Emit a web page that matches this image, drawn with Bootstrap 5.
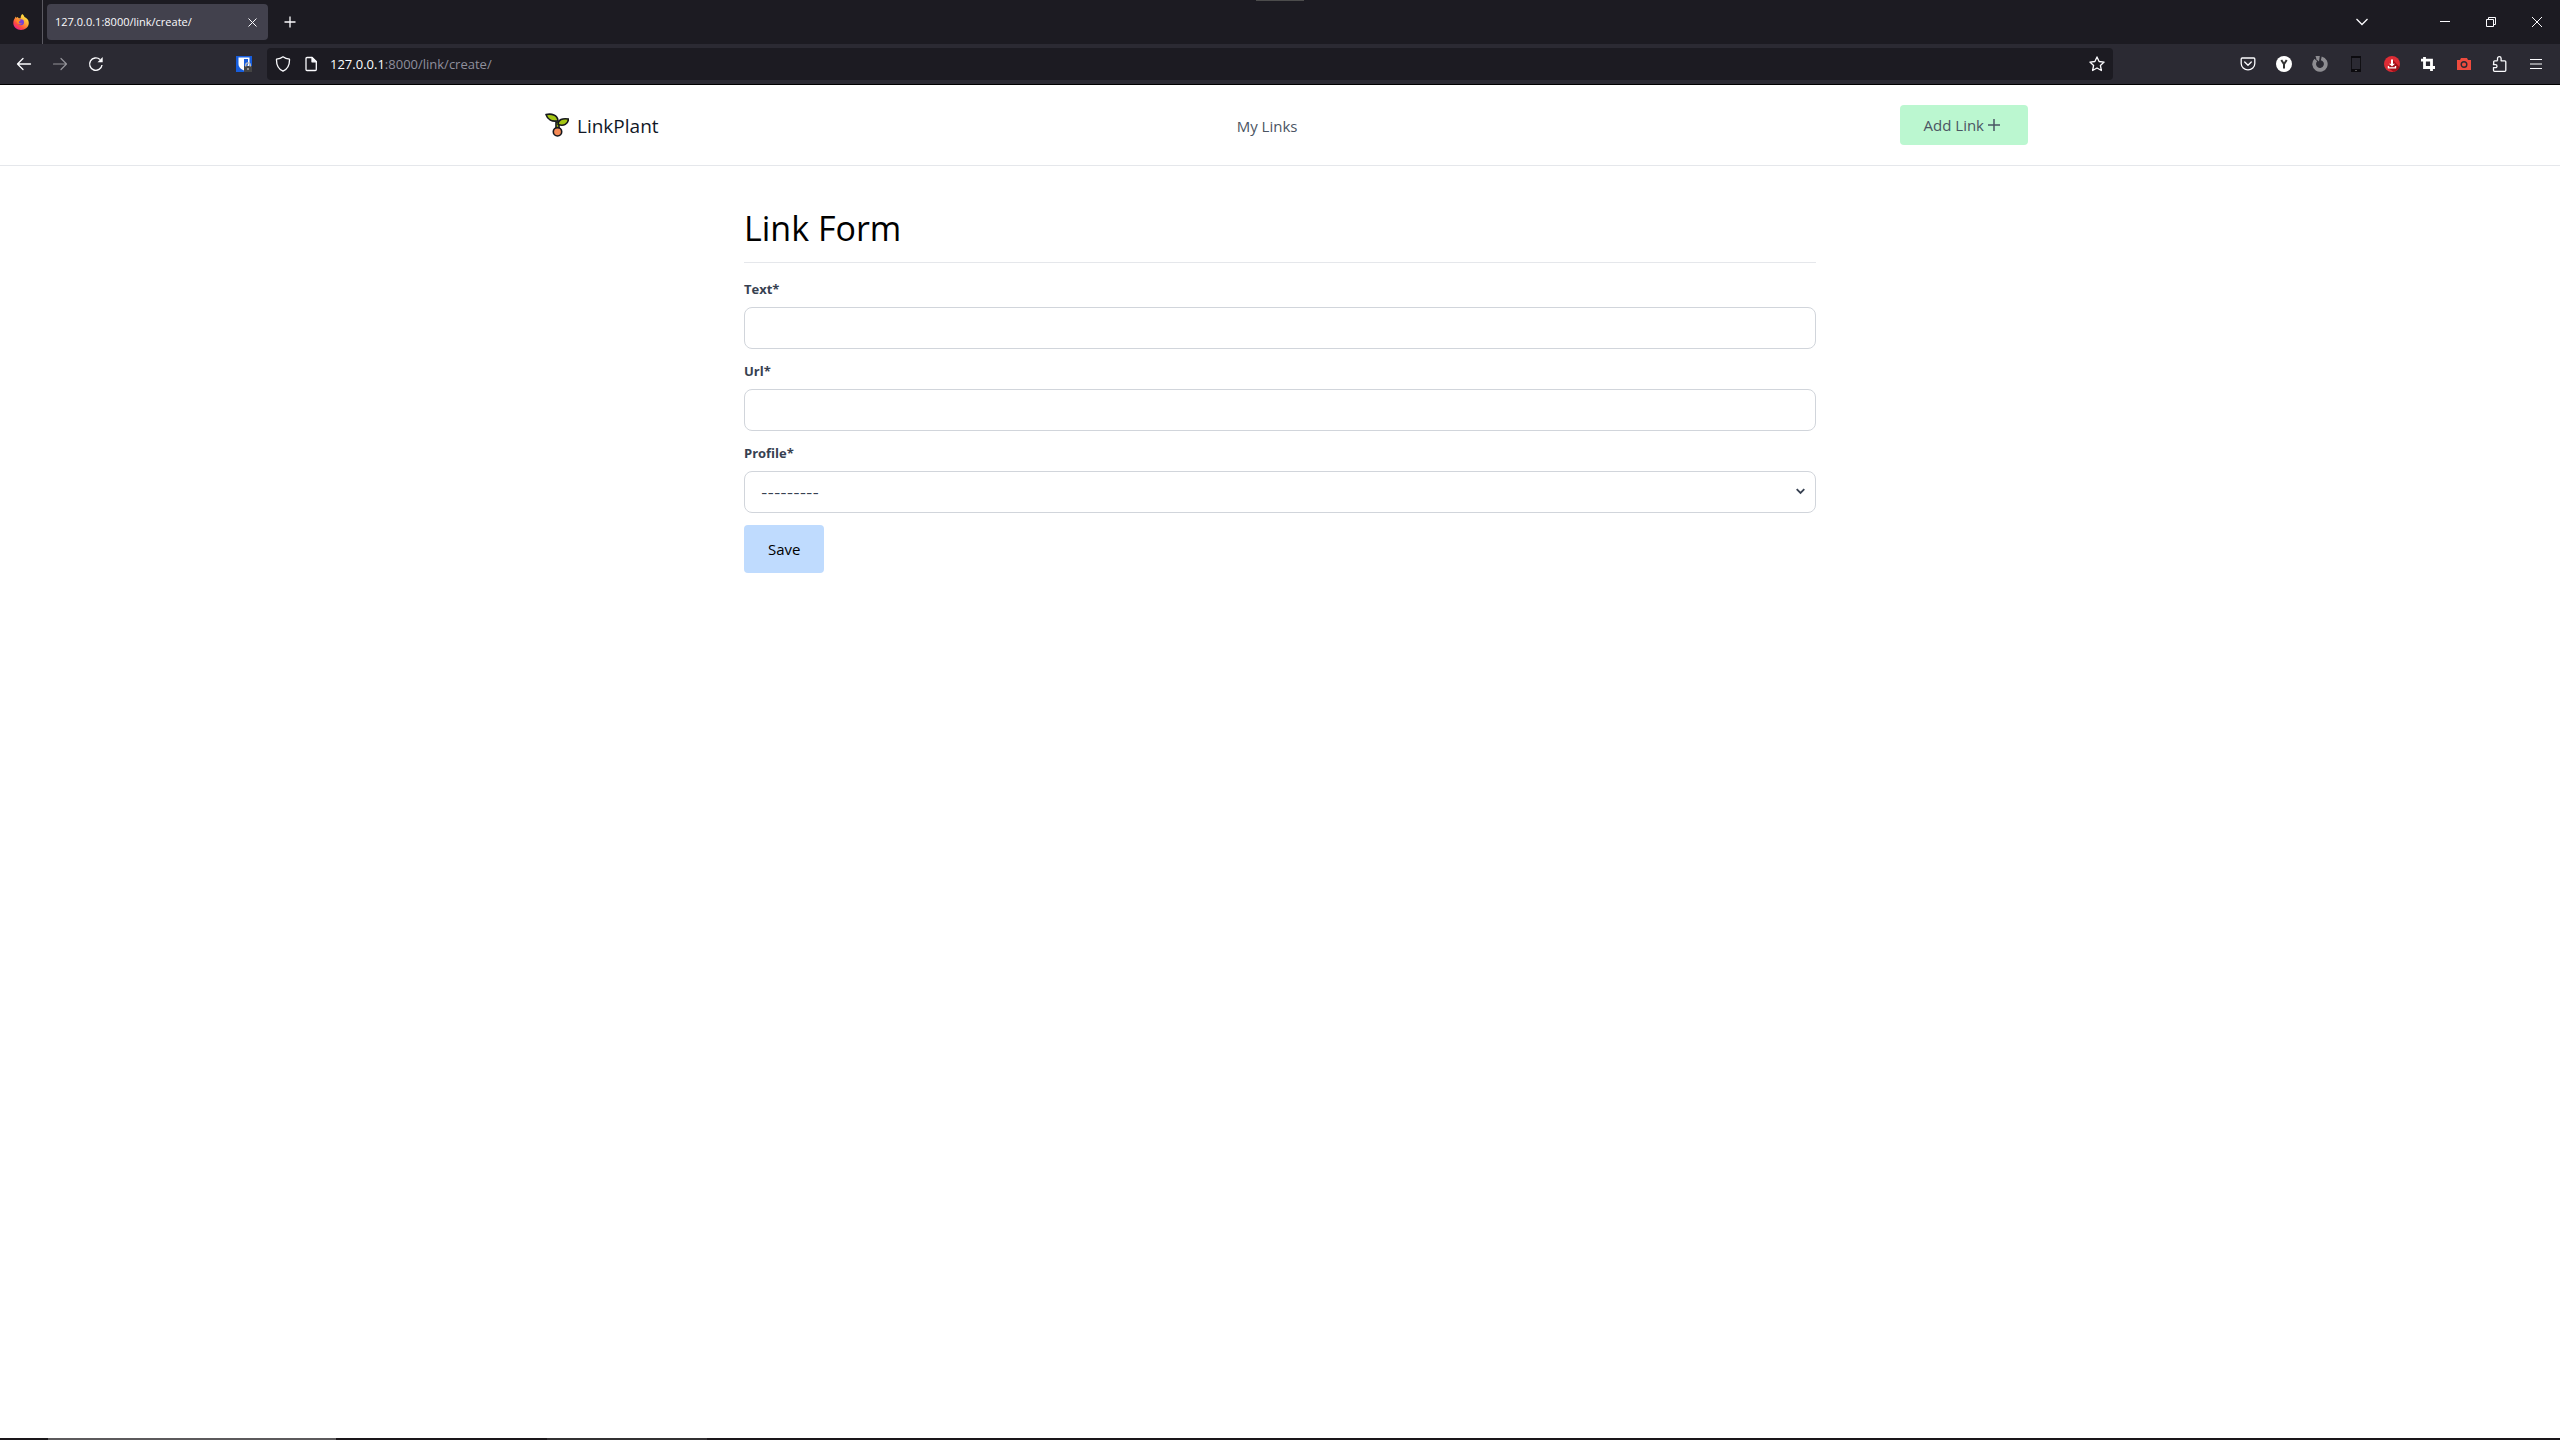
<!DOCTYPE html>
<html lang="en">
<head>
<meta charset="utf-8">
<meta name="viewport" content="width=device-width, initial-scale=1">
<title>127.0.0.1:8000/link/create/</title>
<link rel="stylesheet" href="https://cdn.jsdelivr.net/npm/bootstrap@5.3.0/dist/css/bootstrap.min.css">
<style>
body{font-family:"Open Sans","Noto Sans",sans-serif;font-size:15px;line-height:24px;color:#000;min-height:100vh}
svg{display:block;flex:none}
.chrome-btn{border:0;background:none;padding:0;width:36px;height:40px;flex:none;display:flex;align-items:center;justify-content:center;color:#fbfbfe}
.tab-strip{background:#1c1b22;height:44px}
.tab-strip .chrome-btn{height:44px}
.tab-strip .win-btn{width:46px}
.all-tabs{margin-right:42px}
.fx-home{width:43px;border-right:1px solid #5b5a62}
.tab-item{background:#42414d;color:#fbfbfe;width:221px;height:36px;border-radius:4px;font-size:11px}
.tab-item .chrome-btn{width:32px;height:36px}
.drag-hint{left:1256px;top:0;width:48px;height:1px;background:#4c4c4c}
.tool-row{background:#2b2a33;height:40px;color:#fbfbfe;padding:0 6px}
.vault{margin-left:112px}
.addr{background:#1c1b22;height:32px;border-radius:4px;margin-left:5px}
.addr .chrome-btn{width:32px}
.addr svg.doc-icon{margin:0 12px 0 5px}
.addr a{font-size:13px;color:#8f8f9d;text-decoration:none}
.addr a span{color:#fbfbfe}
.ext-list{margin-left:117px}
.page-top{border-top:1px solid #000;border-bottom:1px solid #e5e7eb;height:82px}
.top-inner{max-width:1536px;padding:0 20px 0 33px}
.brand{font-size:19px;color:#111827;text-decoration:none;gap:8px}
.menu-link{color:#4b5563;text-decoration:none}
.brand span,.menu-link{padding-top:2px}
.btn-add{background:#bbf7d0;color:#4b5563;border:0;border-radius:4px;font-size:15px;line-height:24px;padding:8px 26px 8px 24px;gap:2px}
.btn-save{background:#bfdbfe;color:#000;border:0;border-radius:4px;font-size:15px;line-height:24px;padding:12px 24px}
.form-area{max-width:1072px;padding-top:42px}
.form-area h1{font-size:34px;line-height:40px;font-weight:400;padding-bottom:14px;margin:0 0 16px;border-bottom:1px solid #e5e7eb}
.form-label{font-size:13px;line-height:20px;font-weight:700;color:#374151}
.form-control,.form-select{height:42px;border-color:#d1d5db;border-radius:8px;padding:8px 16px;font-size:15px;color:#374151}
.field-row{margin-bottom:12px}
.form-select{background-image:none;font-family:Inter,"Open Sans",sans-serif;font-size:14px}
.sel-arrow{right:11px;top:17px;pointer-events:none}
.task-edge{height:2px;background:#1a171a}
.task-edge .gap-a{width:48px}
.task-edge .run-a{width:288px;background:#5c5a5c}
.task-edge .gap-b{width:211px}
.task-edge .run-b{width:160px;background:#333133}
</style>
<script src="https://cdn.jsdelivr.net/npm/bootstrap@5.3.0/dist/js/bootstrap.bundle.min.js"></script>
</head>
<body class="d-flex flex-column bg-white">
<header>
<div class="tab-strip d-flex align-items-center position-relative">
<div class="drag-hint position-absolute"></div>
<div class="fx-home d-flex align-items-center justify-content-center h-100">
<svg width="16" height="16" viewBox="0 0 16 16"><defs><linearGradient id="fx" x1=".85" y1=".1" x2=".2" y2="1"><stop offset="0" stop-color="#fff044"/><stop offset=".4" stop-color="#ffa436"/><stop offset=".7" stop-color="#ff4f3c"/><stop offset="1" stop-color="#e5169a"/></linearGradient></defs><path fill="url(#fx)" d="M9.300.1c1 .8 1.700 1.800 2.200 3C13.900 4 15.800 6 15.800 9c0 4-3.600 7-7.800 7S.3 13 .3 9c0-2 .7-3.600 1.700-5l.4-1.500.8 1.200L4.700 3l1 1.200h2C7.500 2.500 8.300 1.200 9.300.1z"/><circle cx="8" cy="8.300" r="3" fill="#7540d8"/><path fill="#ff8a26" d="M3.500 6c1.500-.9 2.400-.2 4.200.2-.4.900-1.700.9-1.900 1.700 0 1.400 1.700 1.900 3.200 1.200-1.300 2.400-5.500 1.400-5.500-3.100z"/></svg>
</div>
<div class="tab-item d-flex align-items-center justify-content-between ms-1">
<span class="ps-2">127.0.0.1:8000/link/create/</span>
<button class="chrome-btn" type="button" aria-label="Close tab"><svg width="9" height="9" viewBox="0 0 9 9" stroke="currentColor" fill="none"><path d="M.5.5l8 8M8.500.5l-8 8"/></svg></button>
</div>
<button class="chrome-btn ms-1" type="button" aria-label="New tab"><svg width="12" height="12" viewBox="0 0 12 12" stroke="currentColor" fill="none"><path d="M6 .5v11M.5 6h11" stroke-width="1.300"/></svg></button>
<div class="ms-auto d-flex">
<button class="chrome-btn all-tabs" type="button" aria-label="List all tabs"><svg width="12" height="8" viewBox="0 0 12 8" stroke="currentColor" fill="none"><path d="M.5 1L6 6.500 11.500 1" stroke-width="1.300"/></svg></button>
<button class="chrome-btn win-btn" type="button" aria-label="Minimize"><svg width="10" height="10" viewBox="0 0 10 10" stroke="currentColor"><path d="M0 4.500h10"/></svg></button>
<button class="chrome-btn win-btn" type="button" aria-label="Restore"><svg width="10" height="10" viewBox="0 0 10 10" stroke="currentColor" fill="none"><path d="M.5 2.500h7v7h-7zM2.500 2.500v-2h7v7h-2"/></svg></button>
<button class="chrome-btn win-btn" type="button" aria-label="Close"><svg width="10" height="10" viewBox="0 0 10 10" stroke="currentColor"><path d="M0 0l10 10M10 0L0 10"/></svg></button>
</div>
</div>
<div class="tool-row d-flex align-items-center">
<button class="chrome-btn" type="button" aria-label="Back"><svg width="16" height="16" viewBox="0 0 16 16" stroke="currentColor" fill="none" stroke-width="1.300" stroke-linecap="round" stroke-linejoin="round"><path d="M14.500 8H1.500M7 2.500L1.500 8 7 13.500"/></svg></button>
<button class="chrome-btn opacity-50" type="button" aria-label="Forward"><svg width="16" height="16" viewBox="0 0 16 16" stroke="currentColor" fill="none" stroke-width="1.200" stroke-linecap="round" stroke-linejoin="round"><path d="M1.500 8h13M9 2.500L14.500 8 9 13.500"/></svg></button>
<button class="chrome-btn" type="button" aria-label="Reload"><svg width="16" height="16" viewBox="0 0 16 16" fill="none" stroke="currentColor" stroke-width="1.400"><path d="M14 9A6.200 6.200 0 1 1 12 3.500"/><path d="M9.500 6.300h5.200V1z" fill="currentColor" stroke="none"/></svg></button>
<button class="chrome-btn vault" type="button" aria-label="Password manager"><svg width="16" height="16" viewBox="0 0 16 16"><rect width="16" height="16" fill="#175ddc"/><path fill="#fff" d="M2.500 1.500h11V8c0 3.500-3 5.500-5.500 6.500C5.500 13.500 2.500 11.500 2.500 8z"/><path fill="#175ddc" d="M8 3h4v5c0 2-2 3.500-4 4.500z"/><rect x="8" y="10" width="8" height="6" fill="#444"/><path d="M9.700 10.500V9.200a2.300 2.300 0 0 1 4.600 0v1.300" fill="none" stroke="#bbb" stroke-width="1.400"/><path d="M11.500 12h1v2h-1z" fill="#ddd"/></svg></button>
<div class="addr d-flex align-items-center flex-grow-1">
<button class="chrome-btn" type="button" aria-label="Tracking protection"><svg width="16" height="16" viewBox="0 0 16 16" fill="none" stroke="currentColor" stroke-width="1.300" stroke-linejoin="round"><path d="M8 .8c2 1.600 4 2.200 6.500 2.400.2 5.500-1.800 9.800-6.500 12C3.300 13 1.300 8.700 1.500 3.200 4 3 6 2.400 8 .8z"/></svg></button>
<svg class="doc-icon" width="14" height="16" viewBox="0 0 14 16" fill="none" stroke="#fbfbfe" stroke-width="1.300" stroke-linejoin="round"><path d="M3 1.500h5L12.300 5.800v7.700a1 1 0 0 1-1 1H3a1 1 0 0 1-1-1v-11a1 1 0 0 1 1-1z"/><path d="M8 1.500v4.300h4.300z" fill="#fbfbfe"/></svg>
<a href="#"><span>127.0.0.1</span>:8000/link/create/</a>
<button class="chrome-btn ms-auto" type="button" aria-label="Bookmark"><svg width="16" height="16" viewBox="0 0 16 16" fill="none" stroke="currentColor" stroke-width="1.300" stroke-linejoin="round"><path d="M8 .9l2.100 4.600 5 .6-3.700 3.400 1 5L8 12l-4.400 2.500 1-5L.9 6.100l5-.6z"/></svg></button>
</div>
<div class="ext-list d-flex">
<button class="chrome-btn" type="button" aria-label="Pocket"><svg width="16" height="16" viewBox="0 0 16 16" fill="none" stroke="currentColor" stroke-width="1.300" stroke-linecap="round" stroke-linejoin="round"><path d="M2.200 2h11.600c.6 0 1 .4 1 1v4.500a6.800 6.300 0 0 1-13.600 0V3c0-.6.400-1 1-1z"/><path d="M4.700 6L8 9.200 11.300 6"/></svg></button>
<button class="chrome-btn" type="button" aria-label="Y extension"><svg width="16" height="16" viewBox="0 0 16 16"><circle cx="8" cy="8" r="8" fill="#fff"/><path d="M5.300 4L8 8.200 10.700 4M8 8v4.500" fill="none" stroke="#333" stroke-width="2"/></svg></button>
<button class="chrome-btn" type="button" aria-label="Ring extension"><svg width="16" height="16" viewBox="0 0 16 16"><path d="M9.300 2.400A5.800 5.800 0 1 1 3.800 4" fill="none" stroke="#8d8c91" stroke-width="3.800"/><path d="M3.500 0h4.300L7 5.500 4.500 3.500z" fill="#8d8c91"/></svg></button>
<button class="chrome-btn" type="button" aria-label="Mobile view"><svg width="16" height="16" viewBox="0 0 16 16"><rect x="3.500" y=".5" width="9" height="15" rx="1" fill="#2b2a33" stroke="#111014"/><path d="M3 13h10v3H3zM3 0h10v2H3z" fill="#0c0b0f"/><path d="M7 14h2v1H7z" fill="#555"/></svg></button>
<button class="chrome-btn" type="button" aria-label="Downloader"><svg width="16" height="16" viewBox="0 0 16 16"><circle cx="8" cy="8" r="8" fill="#dd2c35"/><path d="M9 4l6.500 7a8 8 0 0 1-6 4.800L4 12z" fill="#a30f18"/><path d="M7 3.500h2v4.300h2l-3 2.600-3-2.600h2zM3.800 10h1.400v1.300h5.600V10h1.400v2.600H3.800z" fill="#fff"/></svg></button>
<button class="chrome-btn" type="button" aria-label="Crop tool"><svg width="16" height="16" viewBox="0 0 16 16" fill="none" stroke="#fff" stroke-width="2.800"><path d="M4.500 1v10.500H15M1 4.200h10.500V15"/></svg></button>
<button class="chrome-btn" type="button" aria-label="Screenshot"><svg width="16" height="16" viewBox="0 0 16 16"><path d="M1 4h3l1-2h6l1 2h3v10H1z" fill="#ee4b3e"/><circle cx="8" cy="8.500" r="2.800" fill="none" stroke="#2b2a33" stroke-width="1.400"/></svg></button>
<button class="chrome-btn" type="button" aria-label="Extensions"><svg width="16" height="16" viewBox="0 0 16 16" fill="none" stroke="currentColor" stroke-width="1.300" stroke-linejoin="round"><path d="M5.500 4.800V2.500a1.800 1.800 0 0 1 3.600 0v2.300h3.700a1 1 0 0 1 1 1v8.500a1 1 0 0 1-1 1H2.500a1 1 0 0 1-1-1v-2.600h2a1.500 1.500 0 0 0 0-3h-2V7.800"/><path d="M1.700 8V5.800a1 1 0 0 1 1-1h2.800"/></svg></button>
<button class="chrome-btn" type="button" aria-label="Menu"><svg width="12" height="12" viewBox="0 0 12 12" stroke="currentColor" stroke-width="1.200"><path d="M0 1.500h12M0 6h12M0 10.500h12"/></svg></button>
</div>
</div>
</header>
<nav class="page-top">
<div class="top-inner mx-auto h-100 d-flex align-items-center justify-content-between">
<a class="brand d-flex align-items-center" href="#">
<svg width="24" height="24" viewBox="0 0 24 24" stroke="#16181d" stroke-width="1.600" stroke-linejoin="round"><path d="M11 9h3v8h-3z" fill="#a4c614"/><path d="M1 1.500c5.500-1 11.500 0 12 6.300C7 9 2.500 6.500 1 1.500z" fill="#a4c614"/><path d="M13 11.500c0-5 4.500-6.500 10.500-5.500-.5 5-4.500 7.500-10.500 5.500z" fill="#a4c614"/><circle cx="12.500" cy="18.800" r="4.200" fill="#f58a55"/></svg>
<span>LinkPlant</span></a>
<a class="menu-link me-4" href="#">My Links</a>
<button class="btn btn-add d-flex align-items-center" type="button">Add Link<svg width="16" height="16" viewBox="0 0 16 16" stroke="currentColor" stroke-width="1.500"><path d="M8 2v12M2 8h12"/></svg></button>
</div>
</nav>
<main class="form-area container-fluid px-0 flex-grow-1">
<h1>Link Form</h1>
<form>
<div class="field-row"><label class="form-label d-block mb-2" for="txt">Text*</label><input class="form-control" id="txt" type="text"></div>
<div class="field-row"><label class="form-label d-block mb-2" for="url">Url*</label><input class="form-control" id="url" type="url"></div>
<div class="field-row"><label class="form-label d-block mb-2" for="prof">Profile*</label>
<div class="position-relative"><select class="form-select" id="prof"><option>---------</option></select>
<svg class="sel-arrow position-absolute" width="9" height="7" viewBox="0 0 9 7" fill="none" stroke="#374151" stroke-width="1.800"><path d="M.7 1.200L4.500 5 8.300 1.200"/></svg></div></div>
<button class="btn btn-save" type="submit">Save</button>
</form>
</main>
<footer class="task-edge d-flex"><div class="gap-a"></div><div class="run-a"></div><div class="gap-b"></div><div class="run-b"></div></footer>
</body>
</html>
